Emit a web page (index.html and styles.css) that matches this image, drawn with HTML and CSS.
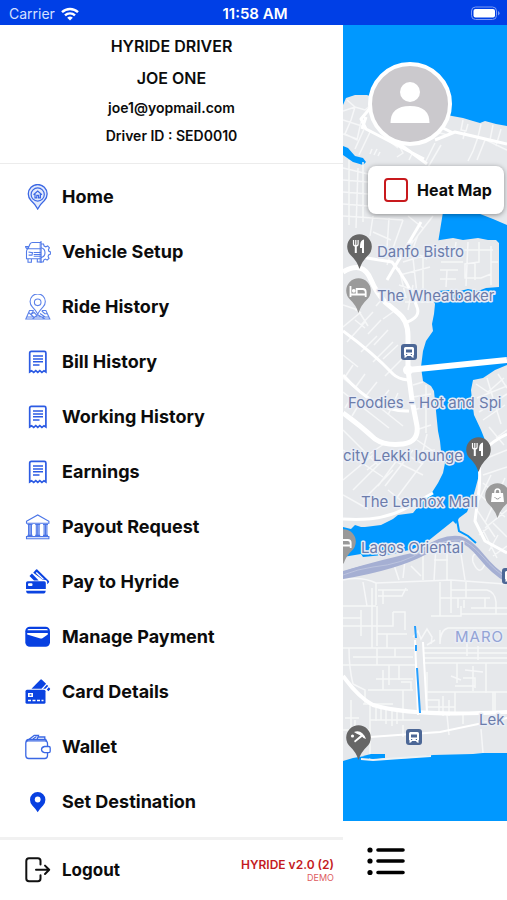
FILE: index.html
```html
<!DOCTYPE html>
<html lang="en">
<head>
    <meta charset="UTF-8">
    <meta name="viewport" content="width=device-width, initial-scale=1">
    <title>Hyride Driver</title>
    <link rel="stylesheet" href="styles.css">
</head>
<body>
<div class="status">
    <div class="carrier">
        <span>Carrier</span>
        <svg width="18" height="14" viewBox="0 0 18 14"><g fill="none" stroke="#fff" stroke-width="2.4"><path d="M1 5.2a11.5 11.5 0 0 1 16 0"/><path d="M4 8.4a7.2 7.2 0 0 1 10 0"/></g><path d="M9 13.6 6.2 10.8a4 4 0 0 1 5.6 0z" fill="#fff"/></svg>
    </div>
    <time>11:58 AM</time>
    <svg class="battery" width="30" height="15" viewBox="0 0 30 15"><rect x=".5" y="1" width="25" height="12.5" rx="4" fill="none" stroke="#7d9bf3"/><rect x="2.5" y="3" width="21.5" height="8.5" rx="2" fill="#fff"/><path d="M27 5v4.500q1.600-.7 1.600-2.200T27 5z" fill="#7d9bf3"/></svg>
</div>
<div class="app">
    <aside class="drawer">
        <header class="profile">
            <h1>HYRIDE DRIVER</h1>
            <h2>JOE ONE</h2>
            <p>joe1@yopmail.com</p>
            <p>Driver ID : SED0010</p>
        </header>
        <nav class="menu">
            <a href="#">
                <svg class="icon" viewBox="0 0 26 26"><path d="M12.700 25Q10 20 6 16.500a9.400 9.400 0 1 1 13.400 0Q15.400 20 12.700 25z" fill="#e3eafc" stroke="#3c68e4" stroke-width="1.300"/><g fill="none" stroke="#3c68e4" stroke-width="1.200"><circle cx="12.700" cy="10.500" r="6.600"/><path d="m8.500 10.700 4.200-3.600 4.200 3.600M10 10v3.800h1.800v-2.400h1.800v2.400h1.800V10"/></g></svg>
                <span>Home</span>
            </a>
            <a href="#">
                <svg class="icon" viewBox="0 0 26 26"><g fill="none" stroke="#527be9" stroke-width="1.100"><path d="M16 3.500H7.500Q5.800 3.500 5 5L3 9.800h13M3 9.800q-1.500.7-1.500 2.700v7.200H16M.6 7.600h2.600v1.800H1.700q-1.100-.5-1.100-1.800zM3 19.700v3.500h3.400v-3.500M3.500 13l4 .7-.5 2.400H3.600M8.700 13.500H16M8.700 15.500H16M8.700 17.200H16M12.300 20v3H16M16 2v22"/><path d="M16 5h2.500l.6 2 1.700.8 1.900-.9 1.700 2-1 1.700.3 1.500 1.700.8v2.300l-1.800.8-.5 1.400.9 2-1.900 1.700-1.700-1-1.500.7-.7 2.200H16M16 8.800a5 5 0 0 1 0 9.800"/></g><path d="M14.300 3.500h2.200v20h-2.200z" fill="#527be9" opacity=".45"/></svg>
                <span>Vehicle Setup</span>
            </a>
            <a href="#">
                <svg class="icon" viewBox="0 0 26 26"><g fill="none" stroke="#5c82ea" stroke-width="1.100"><path d="M12.700 20Q10.500 16 7.300 12.800a7.600 7.600 0 1 1 10.800 0Q14.900 16 12.700 20z"/><circle cx="12.700" cy="8.300" r="3.300"/><path d="M8.700 16.500H4.500L.8 25h24l-3.900-8.500h-4.100M1.500 23h22.800M3.600 18.500l5 4.500M8.700 16.500 6 20.300l3.200-1.800 3.200 3.300M7.500 25l5.200-4.300L20 25M16.800 17l3 2.700 2.500-.2M15 19.500l5.500 3.800"/></g></svg>
                <span>Ride History</span>
            </a>
            <a href="#">
                <svg class="icon" viewBox="0 0 26 26"><path d="M4.700 23V4q0-1.600 1.600-1.600h13q1.600 0 1.600 1.600v19l-1.900-1.300-2.100 1.700-2.100-1.700-2 1.700-2-1.700-2.100 1.700-2.100-1.700z" fill="none" stroke="#2c5be3" stroke-width="1.700"/><path d="M8 7h10M8 10h10M8 12.800h10M8 16h6.500" stroke="#2c5be3" stroke-width="1.500"/></svg>
                <span>Bill History</span>
            </a>
            <a href="#">
                <svg class="icon" viewBox="0 0 26 26"><path d="M4.700 23V4q0-1.600 1.600-1.600h13q1.600 0 1.600 1.600v19l-1.900-1.300-2.100 1.700-2.100-1.700-2 1.700-2-1.700-2.100 1.700-2.100-1.700z" fill="none" stroke="#2c5be3" stroke-width="1.700"/><path d="M8 7h10M8 10h10M8 12.800h10M8 16h6.500" stroke="#2c5be3" stroke-width="1.500"/></svg>
                <span>Working History</span>
            </a>
            <a href="#">
                <svg class="icon" viewBox="0 0 26 26"><path d="M4.700 23V4q0-1.600 1.600-1.600h13q1.600 0 1.600 1.600v19l-1.900-1.300-2.100 1.700-2.100-1.700-2 1.700-2-1.700-2.100 1.700-2.100-1.700z" fill="none" stroke="#2c5be3" stroke-width="1.700"/><path d="M8 7h10M8 10h10M8 12.800h10M8 16h6.500" stroke="#2c5be3" stroke-width="1.500"/></svg>
                <span>Earnings</span>
            </a>
            <a href="#">
                <svg class="icon" viewBox="0 0 26 26"><g fill="none" stroke="#4b75e7" stroke-width="1.100"><path d="M1.500 7.200 12.700 1l11.200 6.200v2H1.500zM1.500 22.600h22.400v2.200H1.500zM2.500 10.500h5M10.200 10.500h5M18 10.500h5M2.500 21.400h5M10.200 21.400h5M18 21.400h5"/><path d="M3.600 11v10M5 11v10M6.400 11v10M11.300 11v10M12.700 11v10M14.100 11v10M19.100 11v10M20.500 11v10M21.900 11v10"/></g></svg>
                <span>Payout Request</span>
            </a>
            <a href="#">
                <svg class="icon" viewBox="0 0 26 26"><g fill="#0b43e1"><path d="M2.700 12.200h16.500q1.600 0 1.600 1.600v6.200H1v-6.200q0-1.600 1.700-1.600zM1 21.800h19.800q-.3 2.700-2 2.700H3q-1.700 0-2-2.700z"/><path d="m4.500 7 2.400-2.400 6.800 6.900H9zM12 .3l11.700 11.400q1 1 0 2l-1.500 1.600v-2.500q-.6-2-2.800-2.100h-1.600L8.200 3.700l2.400-2.800q.7-.9 1.400-.6z"/></g><path d="m11.800 3 7.400 7.300h-1.700l-6.800-6.200z" fill="#fff"/><rect x="3" y="14.300" width="4.500" height="2.800" rx="1" fill="#fff"/></svg>
                <span>Pay to Hyride</span>
            </a>
            <a href="#">
                <svg class="icon" viewBox="0 0 26 26"><rect x=".3" y="2.700" width="24.700" height="20" rx="4.500" fill="#0840e1"/><path d="M4 4.900h17.300q1.300 0 1.600 1.300H2.400q.3-1.300 1.600-1.300zM2.200 9h20.600v1.500l-5.400 3.700q-.9.500-2 .2L2.200 10.500z" fill="#fff"/></svg>
                <span>Manage Payment</span>
            </a>
            <a href="#">
                <svg class="icon" viewBox="0 0 26 26"><g fill="#0b43e1"><rect x=".5" y="10.800" width="20" height="14" rx="1.500"/><path d="m6.500 9.700 8.800-9q.8-.8 1.600 0l4.200 4-4.600 5zM18.200 9.700l3.700-3.900 1.300 1.200-2.700 2.800zM21.800 10.400l2-2.100 1.200 1.200q.4.900-.4 1.500l-1.300 1.200z"/></g><path d="M3 14h5v4H3z" fill="#fff"/><path d="M4.600 15.300h1.800v1.400H4.600z" fill="#0b43e1"/><path d="M3 21.500h3M7.500 21.500h3M12 21.500h3M16.500 21.500h2" stroke="#fff" stroke-width="1.300"/></svg>
                <span>Card Details</span>
            </a>
            <a href="#">
                <svg class="icon" viewBox="0 0 26 26"><g fill="none" stroke="#3a67e4" stroke-width="1.300"><path d="M22.500 12.500V9.800q0-3-2.600-3H3Q.8 6.800.8 9v12.500q0 3 2.900 3h16q2.800 0 2.800-3v-2.800M1 8q.1-2.600 2.700-2.700h17l1.500 3"/><path d="M19.500 12.500h4.300q1.400 0 1.400 1.400v3.300q0 1.400-1.400 1.400h-4.300q-3-.6-3-3t3-3.100zM4.200 5.200l5-3.800h4.300l-1.300 3.800M8 5l3.500-2.600M13.500 3h6.300v2.200"/></g></svg>
                <span>Wallet</span>
            </a>
            <a href="#">
                <svg class="icon" viewBox="0 0 26 26"><path d="M12.700 23.200Q11 20.300 7.300 16.500 5 14 5 10.700a7.700 7.700 0 0 1 15.400 0q0 3.300-2.300 5.800-3.700 3.800-5.400 6.700z" fill="#0840e1"/><circle cx="12.700" cy="10.500" r="2.900" fill="#fff"/></svg>
                <span>Set Destination</span>
            </a>
        </nav>
        <footer class="logout">
            <a href="#">
                <svg class="icon" viewBox="0 0 26 26"><g fill="none" stroke="#111" stroke-width="2" stroke-linecap="round" stroke-linejoin="round"><path d="M15.500 7.500V3.800q0-2.600-2.600-2.600H4Q1.300 1.200 1.300 4v17.500q0 2.800 2.700 2.800h8.900q2.600 0 2.600-2.800v-3.300M11 12.800h13M20 8.600l4.200 4.200-4.200 4.200"/></g></svg>
                <span>Logout</span>
            </a>
            <p class="version">HYRIDE v2.0 (2)<small>DEMO</small></p>
        </footer>
    </aside>
    <main class="screen">
        <div class="map">
            <svg class="tiles" viewBox="0 25 164 796" preserveAspectRatio="xMinYMin slice">
                <rect y="25" width="164" height="796" fill="#0098ff"/>
                <!-- land -->
                <path fill="#e6e8eb" d="M0 105 3 98l9-3 12 0 5 2 80 19 11 2 10 3 7 2 5-2 11 3 11 2v627h-24l-10 1-40 1-22 3-28 1-18-3-12 2-10 3V105z"/>
                <!-- lagoon -->
                <path fill="#0098ff" d="M0 146l5 2 7 8 8 2 3 4-3 3-10-3-10-7zM100 212l12-6 20 6 18 7 14 6v140l-12 5-6 4-6 4-10 2-2 10 1 10 2 15 7 15 4 10-4 20-2 15-4 15-3 10-5 12-8 6-3 6-3-3-15 12-10 8-15 8-20 5-30 3-2-3-18 3v-30l8 2 4-4 6 2 4 0 16-2 12-6 5-4 15-2 8-10 10-9 7-11 5-10 2-10-4-12-1-10-2-10-2-20-2-20-3-5-8-5-2-14 2-16 3-10 7-10-1-7 2-10 1-10-5-12z"/>
                <path fill="#e6e8eb" d="M84 242l26-4 10 2 15-2 10 2 8 0 3 3v44l-13 1-8 3-10-2-8 2-12-1-10 1-2 4-9 3zM162 197h2v10h-2z"/>
                <path fill="none" stroke="#0098ff" stroke-width="2" d="m114 520 2 11 9 5 8 7"/>
                <!-- side streets -->
                <g class="lanes">
                    <path d="M0 111l12-4 10 3 6-5M0 120l22 7M0 134l14 5M4 100l8 7-4 13-6 14 12 6 4-18M22 127l-10 22M28 130l-12 25M27 154l2-5M31 155l3-6M35 156l2-4M45 140l10 8M52 138l8 15-6 4M92 143l-10 20M98 145l-14 24M120 120l-2 10 5 1 2-7M122 131l-2 8M138 124l-3 13-5 14-5 10M150 125l-3 15M158 129l-5 17M164 150l-25-12M142 140l-8 20M85 130l20 5M70 152l-4 8"/>
                    <path d="M0 168l25 6M0 180l25 2M0 192l25 2M0 204l25 2M6 160v65M15 168l-2 60M20 162v60M0 216l60 4M30 216l-3 20M46 218l-2 30M60 220l-16 45M90 216l-35 45M65 216l15 12M30 232l18 8M70 240l-10 15M75 235l-6 16 15 8M60 262l26-8M57 275l30-8M56 268l7 30M70 258l4 36M80 257v35M56 285l30 10M62 302l28 0"/>
                    <path d="M100 250h50M98 262h22M97 270h18M125 242l-2 44M136 242v20l-14 2v14h16l10-4V246M113 242l-2 14M104 270l-1 17M132 262v18M148 262h7M97 279h16M148 285v-11"/>
                    <path d="M0 305l15 5 10 16M0 327l18-15M12 320l10 8M30 312l-12 13M38 320l-13 14M45 330l-14 15M16 300l-3 11M40 298l-7 8M50 312l-10 7M70 285l-5 25M55 345l-15 14M4 342l18-20M18 352l16-16M30 362l20-20M42 376l20-20M0 355l15 12M10 365l-8 12M22 374l-10 14M34 382l-12 15M46 390l-14 18M55 393l-10 22M0 378l60 48M0 392l46 36M7 400l-5 8M15 406l-6 10M70 385l10-3M70 397l18-3M70 410l20-5M83 385v48"/>
                </g>
                <g class="lanes">
                    <path d="M0 430l35 35M0 450l40 27M14 462l30-20M24 470l25-20M0 480l30-25M10 490l30-30M20 500l30-30M0 495l25 14M55 450l25 14M50 460l30 15M60 452l-25 34M70 450l-28 36M82 460l-30 40M84 434l-6 25M88 425l-12 4M92 450l-17 2M45 490l15 12M74 440l20 14"/>
                    <path d="M133 384l12 8 16-14M134 398l30-12M136 412l28-18M144 378l6 20 8 26M155 374l9 14M140 420l22-15M146 427l15 18M153 438l11-8M164 450l-20 8M140 475l24-8M140 483l24 20M137 495l25 22M132 507l20 30M148 475l-12 25M162 478l-20 45M164 510l-22 18M140 530l14 28M150 523l14 14M164 546l-14 10M155 535l-9 16M136 535l10-8"/>
                    <path d="M0 606h33M33 583l75-3 54 4M20 582l4 24M33 583v22M35 590h30M35 596h24l4-8M40 590v14M50 562l6 18M62 560l-2 18M80 550v30M68 566l10 10M93 545l-2 36M104 552v28M91 560h14M97 582v34M108 581v32M97 598h50M108 590h36q8 2 9 12v12M115 598v10M130 562q-2-10 7-8t4 12-11-4M123 581v17M128 608h36M142 598v10M121 600v8M118 554l4 26M0 580q18-4 33 3"/>
                    <path d="M0 618h18v-8M18 618v18M29 588v60M0 626h50v-14M50 612h12v18M34 606v40M34 634h30M44 634v14M88 616h30v-10M118 614h46M97 630v14q0-14 8-16h59M0 648h72M6 648q0 20 4 36M34 648v17M10 657h60M52 648v9M0 665h72M56 665v15M46 665v20M33 679h37M25 690h45M40 690v-20M58 682h10v8M20 704h30M60 690v30M10 684l12 6v14"/>
                    <path d="M80 648h84M80 653h84M80 658h84M80 663h84M124 640v16M135 646v14M92 640l-8 5M84 663h80M84 692h80M84 672v40M84 700h12v12M100 696v20M106 700v16M112 692v20M108 676l10 4M114 663v20M120 678h12v10M130 666v25M143 663v30M112 686h20M122 670l18 2M152 692v20M84 707h28M70 637l5-6 3 8 6-10 5 8-1 7"/>
                    <path d="M27 705v55M0 730h27M12 720v14M27 720h50M33 708v13M38 706v14M43 710v14M49 710v16M54 712v12M8 700v40M2 718h14M60 725v12M120 714v10M138 729l2 24M104 715l2 20M150 692v22"/>
                </g>
                <!-- main streets -->
                <g class="roads">
                    <path d="M28 107l-10 12 5 10 58 30M54 142l30 22M92 140l20-8 52 12M100 128l10 5M121 134l43 10M23 117l-4 12"/>
                    <path d="M0 272q20-12 28 8 5 12 14 22l12 10q11 8 11 24v34l4 30 5 26q2 16-14 18-18 2-28-5-14-13-32-26" stroke-width="5"/>
                    <path d="M64 322q14-5 10-15-8-25-25-45l-25-4-8-10M78 222l-34 58"/>
                    <path d="M0 331q30 22 50 43 5 5 15 6M0 375q34 38 66 36M0 519q40 3 65-12l25-14M136 490l-4 31 10 20 22 12M134 445q4 25 2 45M141 450q10-10 23-16"/>
                    <path d="M0 676q16 22 30 29 40 12 134 7" stroke-width="4"/>
                    <path d="M72 640l3 75M80 642l4 72M27 737l70-5 67-14" stroke-width="2"/>
                </g>
                <path fill="none" stroke="#fff" stroke-width="6" d="m65 370 20-2 79-8"/>
                <circle cx="65" cy="370" r="5" fill="#fff"/>
                <!-- expressway -->
                <path fill="none" stroke="#a5afd3" stroke-width="6" d="M0 575q15-6 30-8 30-3 50-16 20-14 36-12 10 2 23 18 12 15 25 22"/>
                <path fill="#a5afd3" d="M0 571q40-12 78-20l6 3q-30 16-84 25z"/>
                <path fill="none" stroke="#bcc4de" stroke-width="1" d="M0 575q15-6 30-8 30-3 50-16 20-12 37-11 10 2 23 17 12 14 24 21"/>
                <!-- canals and shore -->
                <path fill="none" stroke="#269fff" stroke-width="2" d="m72 626 1 12M73 645v6M74 668l3 45"/>
                <path fill="#0098ff" d="m20 756 8-2h14v4l-14 1z"/>
                <path fill="none" stroke="#edf2f5" stroke-width="2" d="m18 759 12 1 28-2 30-2"/>
                <!-- stations -->
                <g id="station">
                    <rect x="58" y="344" width="16" height="16" rx="3" fill="#4c6796"/>
                    <path d="M62.500 347h7q1.500 0 1.500 1.500v7h-1l1 2h-2l-1-1.500h-4l-1 1.500h-2l1-2h-1v-7q0-1.500 1.500-1.500z" fill="#fff"/>
                    <path d="M63 349.500h6v3h-6zM63 354h1.200v1H63zM67.800 354H69v1h-1.200z" fill="#4c6796"/>
                </g>
                <use href="#station" x="5" y="385"/>
                <use href="#station" x="101" y="224"/>
                <!-- places -->
                <g fill="#666">
                    <path d="M16.500 269Q14 261 8 255.500a12.300 12.300 0 1 1 17 0Q19 261 16.500 269z"/>
                    <path d="M135.500 472Q133 464 127 458.500a12.300 12.300 0 1 1 17 0Q138 464 135.500 472z"/>
                    <path d="M15.500 760Q13 752 7 746.500a12.300 12.300 0 1 1 17 0Q18 752 15.500 760z"/>
                </g>
                <g fill="#9a9a9a">
                    <path d="M15.500 313Q13 305 7 299.500a12.300 12.300 0 1 1 17 0Q18 305 15.500 313z"/>
                    <path d="M154.500 518Q152 510 146 504.500a12.300 12.300 0 1 1 17 0Q157 510 154.500 518z"/>
                    <path d="M.5 564Q-2 556-8 550.500a12.300 12.300 0 1 1 17 0Q3 556 .5 564z"/>
                </g>
                <g id="fork" fill="none" stroke="#fff">
                    <path stroke-width="1.200" d="M10.500 240v4q0 2 2.300 2t2.300-2v-4M12.800 240v6"/>
                    <path stroke-width="2" d="M12.800 246v7M20 253v-12q-2 1-2 6h2"/>
                </g>
                <use href="#fork" x="119" y="203"/>
                <g id="bed" fill="none" stroke="#fff" stroke-width="1.800">
                    <path d="M7.500 286v11M7.500 294.500h16M22.700 297v-5q0-3-3-3h-6v5"/>
                    <circle cx="10.800" cy="290.800" r="1" fill="#fff"/>
                </g>
                <use href="#bed" x="-15" y="251"/>
                <path d="M149 493h11l1 9h-13z" fill="#fff"/>
                <path d="M152 494v-2q0-3 2.500-3t2.500 3v2" fill="none" stroke="#fff" stroke-width="1.500"/>
                <path d="M151.500 497q3 4 6 0" fill="none" stroke="#9a9a9a"/>
                <path d="M11 732q8-3 12 7l-2.500-1q-2-3-5-3.500-2-.8-4.500-2.500zM11 741l7-6 1.500 1.500-7.500 6z" fill="#fff"/>
                <circle cx="9.500" cy="736" r="1.600" fill="#fff"/>
                <g class="places">
                    <text x="34" y="257">Danfo Bistro</text>
                    <text x="34" y="301">The Wheatbaker</text>
                    <text x="5" y="408">Foodies - Hot and Spi</text>
                    <text x="0" y="461">city Lekki lounge</text>
                    <text x="18" y="507">The Lennox Mall</text>
                    <text x="18" y="553">Lagos Oriental</text>
                    <text x="136" y="725">Lek</text>
                    <text class="district" x="112" y="642">MARO</text>
                </g>
            </svg>
            <button class="avatar" type="button" aria-label="Profile">
                <svg viewBox="0 0 76 76"><circle cx="38" cy="26" r="10" fill="#fff"/><path d="M18.500 57q0-17 19.500-17t19.500 17z" fill="#fff"/></svg>
            </button>
            <label class="heat"><input type="checkbox"><span>Heat Map</span></label>
        </div>
        <div class="toolbar">
            <button type="button" aria-label="Trips">
                <svg width="38" height="30" viewBox="0 0 38 30"><path d="M11 4h25M11 15h25M11 26.500h25" stroke="#000" stroke-width="3.600" stroke-linecap="round"/><circle cx="3" cy="4" r="2.600"/><circle cx="3" cy="15" r="2.600"/><circle cx="3" cy="26.500" r="2.600"/></svg>
            </button>
        </div>
    </main>
</div>
</body>
</html>
```

FILE: styles.css
```css
*{box-sizing:border-box;}
body{
    margin:0;
    min-height:100vh;
    display:flex;
    flex-direction:column;
    font-family:Inter,"Liberation Sans",sans-serif;
    color:#0c0c0c;
    background:#fff;
}
h1,h2,p{margin:0;}
a{color:inherit;text-decoration:none;}
button{padding:0;border:0;background:none;cursor:pointer;}
svg{display:block;}

/* status bar */
.status{
    display:grid;
    grid-template-columns:1fr auto 1fr;
    align-items:center;
    height:25px;
    padding:2px 6px 0 9px;
    background:#003fe6;
    color:#fff;
    font-size:14px;
}
.carrier{display:flex;align-items:center;gap:6px;color:#d5e0ff;}
.status time{font-size:15px;font-weight:600;}
.battery{justify-self:end;}

.app{
    flex:1;
    display:grid;
    grid-template-columns:343fr 164fr;
}
.drawer{display:flex;flex-direction:column;min-width:0;}

.profile{
    display:flex;
    flex-direction:column;
    align-items:center;
    gap:8px;
    padding:9px 0 17px;
    border-bottom:1px solid #ececec;
}
.profile h1,.profile h2{font-size:16px;line-height:24px;font-weight:600;}
.profile p{font-size:14px;line-height:20px;font-weight:600;}

/* menu */
.menu{flex:1;padding-top:5px;}
.menu a,.logout a{
    display:flex;
    align-items:center;
    gap:11px;
    padding-left:25px;
    height:55px;
    font-size:18px;
    font-weight:700;
}
.icon{width:26px;height:26px;flex:none;}
.logout{
    display:flex;
    align-items:center;
    justify-content:space-between;
    height:63px;
    padding-right:9px;
    border-top:3px solid #f1f1f1;
}
.logout a{font-size:17px;}
.version{
    color:#c41a1e;
    font-size:12px;
    line-height:15px;
    font-weight:600;
    text-align:right;
}
.version small{
    display:block;
    font-size:9px;
    line-height:11px;
    font-weight:400;
    color:#dd5c5f;
}

/* map */
.screen{display:flex;flex-direction:column;min-width:0;}
.map{position:relative;flex:1;overflow:hidden;background:#0098ff;}
.tiles{position:absolute;width:100%;height:100%;}
.lanes{fill:none;stroke:#f6f7f8;stroke-width:1.5;}
.roads{fill:none;stroke:#fff;stroke-width:3;stroke-linejoin:round;}
.places{
    font-size:15px;
    fill:#6c7cab;
    stroke:#e9edf5;
    stroke-width:3px;
    stroke-linejoin:round;
    paint-order:stroke;
}
.places .district{fill:#93a3d5;letter-spacing:1px;}
.avatar{
    position:absolute;
    top:37px;
    left:25px;
    width:84px;
    height:84px;
    border:4px solid #fff;
    border-radius:50%;
    background:#cbc9cd;
}
.heat{
    position:absolute;
    top:141px;
    left:25px;
    right:3px;
    height:48px;
    display:flex;
    align-items:center;
    gap:9px;
    padding-left:16px;
    border-radius:8px;
    background:#fff;
    box-shadow:0 1px 5px rgba(0,0,0,.4);
    font-size:16px;
    font-weight:700;
    white-space:nowrap;
}
.heat input{
    appearance:none;
    width:24px;
    height:24px;
    margin:0;
    border:2px solid #c8191d;
    border-radius:4px;
}
.heat input:checked{background:#c8191d;}
.toolbar{
    display:flex;
    align-items:center;
    height:79px;
    padding-left:24px;
}
```
